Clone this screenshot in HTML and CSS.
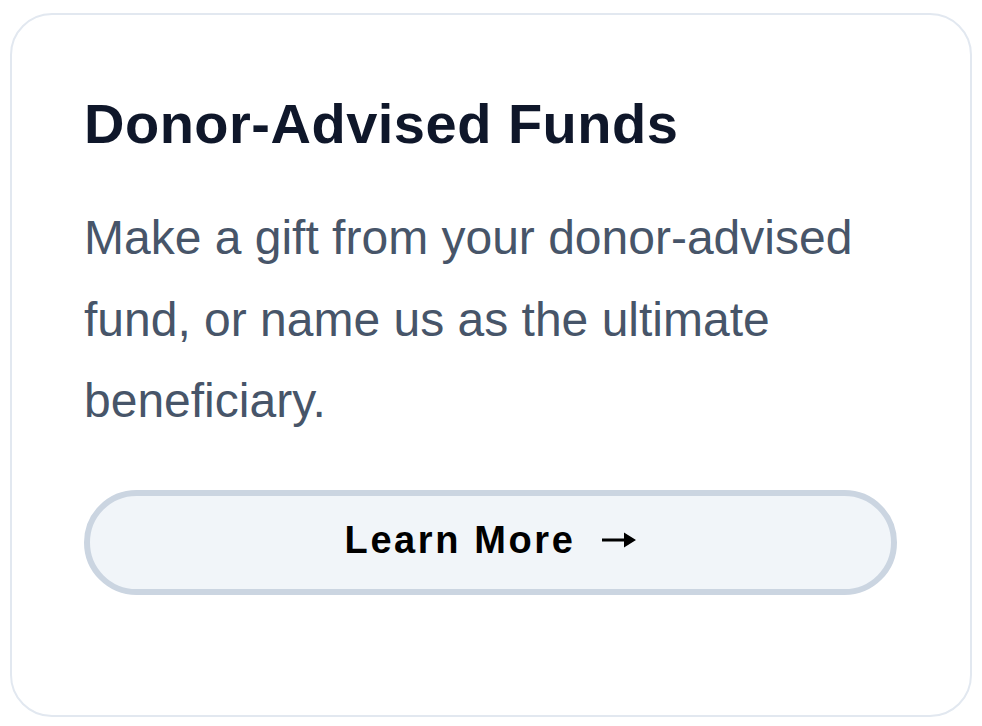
FILE: index.html
```html
<!DOCTYPE html>
<html lang="en">
<head>
<meta charset="utf-8">
<title>Donor-Advised Funds</title>
<link rel="stylesheet" href="styles.css">
</head>
<body>
  <section class="card">
    <h2 class="card-title">Donor-Advised Funds</h2>
    <p class="card-text">Make a gift from your donor-advised fund, or name us as the ultimate beneficiary.</p>
    <a class="card-button" href="#">
      <span class="card-button-label">Learn More</span>
      <svg class="card-button-arrow" width="34" height="18" viewBox="0 0 34 18" aria-hidden="true">
        <path d="M0 7.6H24V10.4H0Z M22 1.5L34 9L22 16.5Z" fill="#000"/>
      </svg>
    </a>
  </section>
</body>
</html>
```
FILE: styles.css
```css
html, body {
  margin: 0;
  padding: 0;
  background: #ffffff;
}

body {
  padding: 13px 10px 0 10px;
  font-family: "Liberation Sans", Arial, Helvetica, sans-serif;
}

.card {
  box-sizing: border-box;
  width: 962px;
  height: 704px;
  border: 2px solid #e2e8f0;
  border-radius: 42px;
  padding: 75px 73px 0 72px;
  display: flex;
  flex-direction: column;
  background: #ffffff;
}

.card-title {
  margin: 0;
  font-size: 56px;
  line-height: 1.2;
  font-weight: 700;
  letter-spacing: 0.5px;
  color: #0f172a;
}

.card-text {
  margin: 40px 0 0 0;
  font-size: 48px;
  line-height: 1.7;
  font-weight: 400;
  color: #475569;
}

.card-button {
  box-sizing: border-box;
  margin-top: 48px;
  height: 105px;
  border: 6px solid #cbd5e1;
  border-radius: 60px;
  background: #f1f5f9;
  display: flex;
  align-items: center;
  justify-content: center;
  gap: 27px;
  padding-bottom: 4px;
  text-decoration: none;
  color: #000000;
}

.card-button-label {
  font-size: 38px;
  font-weight: 700;
  letter-spacing: 2.6px;
  line-height: 1.2;
}

.card-button-arrow {
  display: block;
  flex: none;
}
```
